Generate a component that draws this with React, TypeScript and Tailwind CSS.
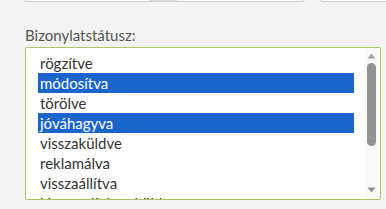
const STATUSES = [
    { label: 'rögzítve', selected: false },
    { label: 'módosítva', selected: true },
    { label: 'törölve', selected: false },
    { label: 'jóváhagyva', selected: true },
    { label: 'visszaküldve', selected: false },
    { label: 'reklamálva', selected: false },
    { label: 'visszaállítva', selected: false },
    { label: 'kiegyenlítésre küldve', selected: false },
]

export default function App() {
    return (
        <div className="w-[386px] h-[209px] overflow-hidden bg-[#f3f3f3] font-['Lato','Noto_Sans',sans-serif]">
            {/* bottom edge of the inputs above */}
            <div className="flex h-[2px] items-end">
                <div className="ml-[24px] w-[281px] h-[6px] rounded-b-[3px] border border-t-0 border-[#cfcfcf] bg-white flex">
                    <div className="ml-[124px] w-[28px] bg-[#dcdce4]" />
                </div>
                <div className="ml-[15px] flex-1 h-[6px] rounded-bl-[3px] border border-t-0 border-r-0 border-[#cfcfcf] bg-white" />
            </div>

            <div className="px-[25px] pt-[23px]">
                <label htmlFor="status" className="block text-[15px] leading-[20px] text-[#555]">Bizonylatstátusz:</label>
                <div className="mt-[2px] w-[356px] h-[153px] flex border border-[#a9c864] rounded-[2px] bg-white overflow-hidden">
                    <ul id="status" className="flex-1 pl-[12px] pr-[11px] pt-[5px] text-[15px] text-[#333]">
                        {STATUSES.map(s => (
                            <li
                                key={s.label}
                                className={
                                    s.selected
                                        ? 'h-[20px] leading-[20px] pl-[2px] whitespace-nowrap bg-[#1a65cc] text-white'
                                        : 'h-[20px] leading-[20px] pl-[2px] whitespace-nowrap'
                                }
                            >
                                {s.label}
                            </li>
                        ))}
                    </ul>
                    <div className="w-[13px] mr-[2px] flex flex-col items-center bg-[#f9f9f9] py-[4px]">
                        <svg width="9" height="6" viewBox="0 0 9 6" className="mt-[1px]">
                            <path d="M4.5 0.5 L8.5 5.5 L0.5 5.5 Z" fill="#a3a3a3" />
                        </svg>
                        <div className="mt-[4px] w-[9px] h-[83px] rounded-full bg-[#929292]" />
                        <div className="flex-1" />
                        <svg width="9" height="6" viewBox="0 0 9 6" className="mb-[2px]">
                            <path d="M0.5 0.5 L8.5 0.5 L4.5 5.5 Z" fill="#8f8f8f" />
                        </svg>
                    </div>
                </div>
            </div>
        </div>
    )
}
